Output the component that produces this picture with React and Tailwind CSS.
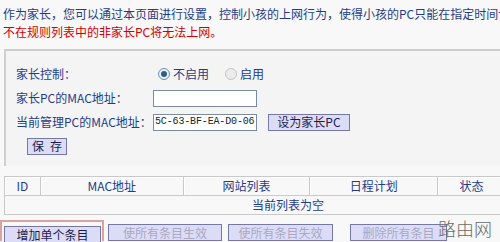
import React from "react";

const FONT = { fontFamily: '"SimSun", "Noto Sans CJK SC", sans-serif' };

function Radio({ checked }) {
  return (
    <span
      className={`inline-flex h-[12px] w-[12px] items-center justify-center rounded-full border ${
        checked ? "border-[#6d8fb0] bg-[#e9f0f6]" : "border-[#c4c4c4] bg-[#ececec]"
      }`}
    >
      {checked && <span className="h-[6px] w-[6px] rounded-full bg-[#2f5f86]" />}
    </span>
  );
}

function Btn({ children, disabled, className = "" }) {
  return (
    <div
      className={`flex items-center justify-center whitespace-nowrap border border-[#7777a6] bg-[#dcdcf6] text-[12px] leading-none ${
        disabled ? "text-[#a9a9c4]" : "text-[#1c1c4a]"
      } ${className}`}
    >
      {children}
    </div>
  );
}

export default function App() {
  const cols = [
    { label: "ID", w: "w-[36px]" },
    { label: "MAC地址", w: "w-[143px]" },
    { label: "网站列表", w: "w-[127px]" },
    { label: "日程计划", w: "w-[128px]" },
    { label: "状态", w: "w-[68px]" },
  ];

  return (
    <div
      className="relative h-[242px] w-[500px] overflow-hidden bg-[#f8f8f8] text-[12px] leading-[18px] text-[#1f3c88]"
      style={FONT}
    >
      <div className="w-[560px] whitespace-nowrap">
        {/* intro text, runs past the window edge like the original page */}
        <div className="pl-[3px] pt-[5px]">
          <div className="w-[497px] overflow-hidden">
            作为家长，您可以通过本页面进行设置，控制小孩的上网行为，使得小孩的PC只能在指定时间访问指定网站。
          </div>
          <div className="text-[#d40000]">不在规则列表中的非家长PC将无法上网。</div>
        </div>

        {/* settings panel */}
        <div className="ml-[4px] mt-[8px] h-[117px] border-l-2 border-t-2 border-l-[#d0d0d0] border-t-[#cdcdcd] bg-[#f4f4f4] pt-[11px]">
          <div className="flex h-[24px] items-center">
            <div className="w-[152px] pl-[10px]">家长控制：</div>
            <div className="flex items-center gap-[3px]">
              <Radio checked />
              <span>不启用</span>
              <span className="ml-[10px]" />
              <Radio />
              <span>启用</span>
            </div>
          </div>
          <div className="flex h-[24px] items-center">
            <div className="w-[147px] pl-[10px]">家长PC的MAC地址：</div>
            <div className="h-[17px] w-[104px] border border-[#7b8aa6] bg-white" />
          </div>
          <div className="flex h-[24px] items-center">
            <div className="w-[147px] pl-[10px]">当前管理PC的MAC地址：</div>
            <div
              className="flex h-[17px] w-[104px] items-center overflow-hidden border border-[#7b8aa6] bg-white pl-[1px] text-[10px] tracking-[-0.15px] text-[#222]"
              style={{ fontFamily: '"Liberation Mono", monospace' }}
            >
              5C-63-BF-EA-D0-06
            </div>
            <Btn className="ml-[11px] h-[17px] w-[82px]">设为家长PC</Btn>
          </div>
          <div className="flex h-[24px] items-center pl-[21px]">
            <Btn className="h-[17px] w-[40px] gap-[6px]">
              <span>保</span>
              <span>存</span>
            </Btn>
          </div>
        </div>

        {/* rule table */}
        <div className="ml-[4px] mt-[10px] w-[502px] border-l border-t border-[#c9c9c9]">
          <div className="flex h-[19px] border-b border-[#c9c9c9]">
            {cols.map((c) => (
              <div
                key={c.label}
                className={`${c.w} flex items-center justify-center border-r border-[#c9c9c9] shadow-[inset_1px_1px_0_#ffffff]`}
              >
                {c.label}
              </div>
            ))}
          </div>
          <div className="flex h-[19px] items-center border-b border-[#c9c9c9] pl-[247px]">
            当前列表为空
          </div>
        </div>

        {/* action buttons */}
        <div className="mt-[5px] flex items-end">
          <div className="h-[21px] w-[104px] border-l-2 border-r-2 border-t-2 border-[#d9a3a3] pl-[2px] pt-[4px]">
            <Btn className="h-[17px] w-[97px]">增加单个条目</Btn>
          </div>
          <Btn disabled className="ml-[4px] h-[17px] w-[114px]">使所有条目生效</Btn>
          <Btn disabled className="ml-[6px] h-[17px] w-[105px]">使所有条目失效</Btn>
          <Btn disabled className="ml-[17px] h-[17px] w-[97px]">删除所有条目</Btn>
        </div>
      </div>

      {/* watermark */}
      <div
        className="absolute left-[438px] top-[217px] text-[18px] leading-[22px] text-[#6b6b6b]"
        style={{ fontFamily: '"Noto Sans CJK SC", sans-serif', fontWeight: 300 }}
      >
        路由网
      </div>
    </div>
  );
}
